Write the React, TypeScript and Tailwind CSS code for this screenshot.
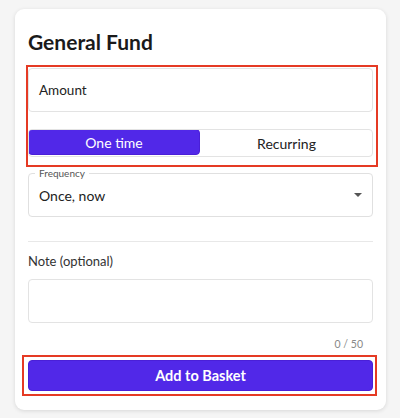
import React from "react";

export default function App() {
  return (
    <div className="w-[400px] h-[418px] bg-[#f5f5f5] pt-[9px] pl-[15px]" style={{ fontFamily: "Lato, 'Noto Sans', sans-serif" }}>
      <div className="w-[371px] h-[401px] bg-white rounded-[9px] shadow-[0_1px_4px_rgba(0,0,0,0.12)] pt-[18px] px-[13px] flex flex-col">
        <div className="h-[28px] flex items-center text-[21px] font-bold text-[#1a1a1a] leading-none">General Fund</div>
        <div className="mt-[10px] -ml-[2px] w-[352px] border-2 border-[#e53a24] pt-[1px] pb-[8px] flex flex-col">
          <div className="w-[345px] h-[44px] border border-[#e3e3e3] rounded-[4px] flex items-center px-[10px] text-[13.5px] text-[#222]">Amount</div>
          <div className="mt-[17px] w-[345px] h-[28px] flex rounded-[4px] border border-[#e3e3e3] overflow-hidden text-[14px]">
            <div className="w-[172px] h-full bg-[#5128e8] border border-[#4a1fd8] rounded-[4px] -m-[1px] flex items-center justify-center text-white">One time</div>
            <div className="flex-1 flex items-center justify-center text-[#222] pl-[2px]">Recurring</div>
          </div>
        </div>
        <div className="mt-[6px] relative w-[345px] h-[44px] border border-[#e0e0e0] rounded-[4px] flex items-center pl-[10px] pr-[10px]">
          <span className="absolute -top-[7px] left-[6px] bg-white px-[4px] text-[10px] leading-[12px] text-[#555]">Frequency</span>
          <span className="flex-1 text-[14px] text-[#222]">Once, now</span>
          <svg width="8" height="4" viewBox="0 0 8 4"><path d="M0 0 L8 0 L4 4 Z" fill="#555" /></svg>
        </div>
        <div className="mt-[24px] w-[345px] h-px bg-[#e8e8e8]" />
        <div className="mt-[12px] h-[16px] flex items-center text-[13px] text-[#333]">Note (optional)</div>
        <div className="mt-[9px] w-[345px] h-[44px] border border-[#e3e3e3] rounded-[4px]" />
        <div className="mt-[16px] w-[335px] h-[12px] flex items-center justify-end text-[10.5px] text-[#888]">0 / 50</div>
        <div className="mt-[4px] -ml-[6px] w-[355px] h-[41px] border-2 border-[#e53a24] pl-[4px] pt-[3px]">
          <div className="w-[345px] h-[31px] bg-[#5128e8] border border-[#4a1fd8] rounded-[4px] flex items-center justify-center text-white text-[14.5px] font-bold">Add to Basket</div>
        </div>
      </div>
    </div>
  );
}
